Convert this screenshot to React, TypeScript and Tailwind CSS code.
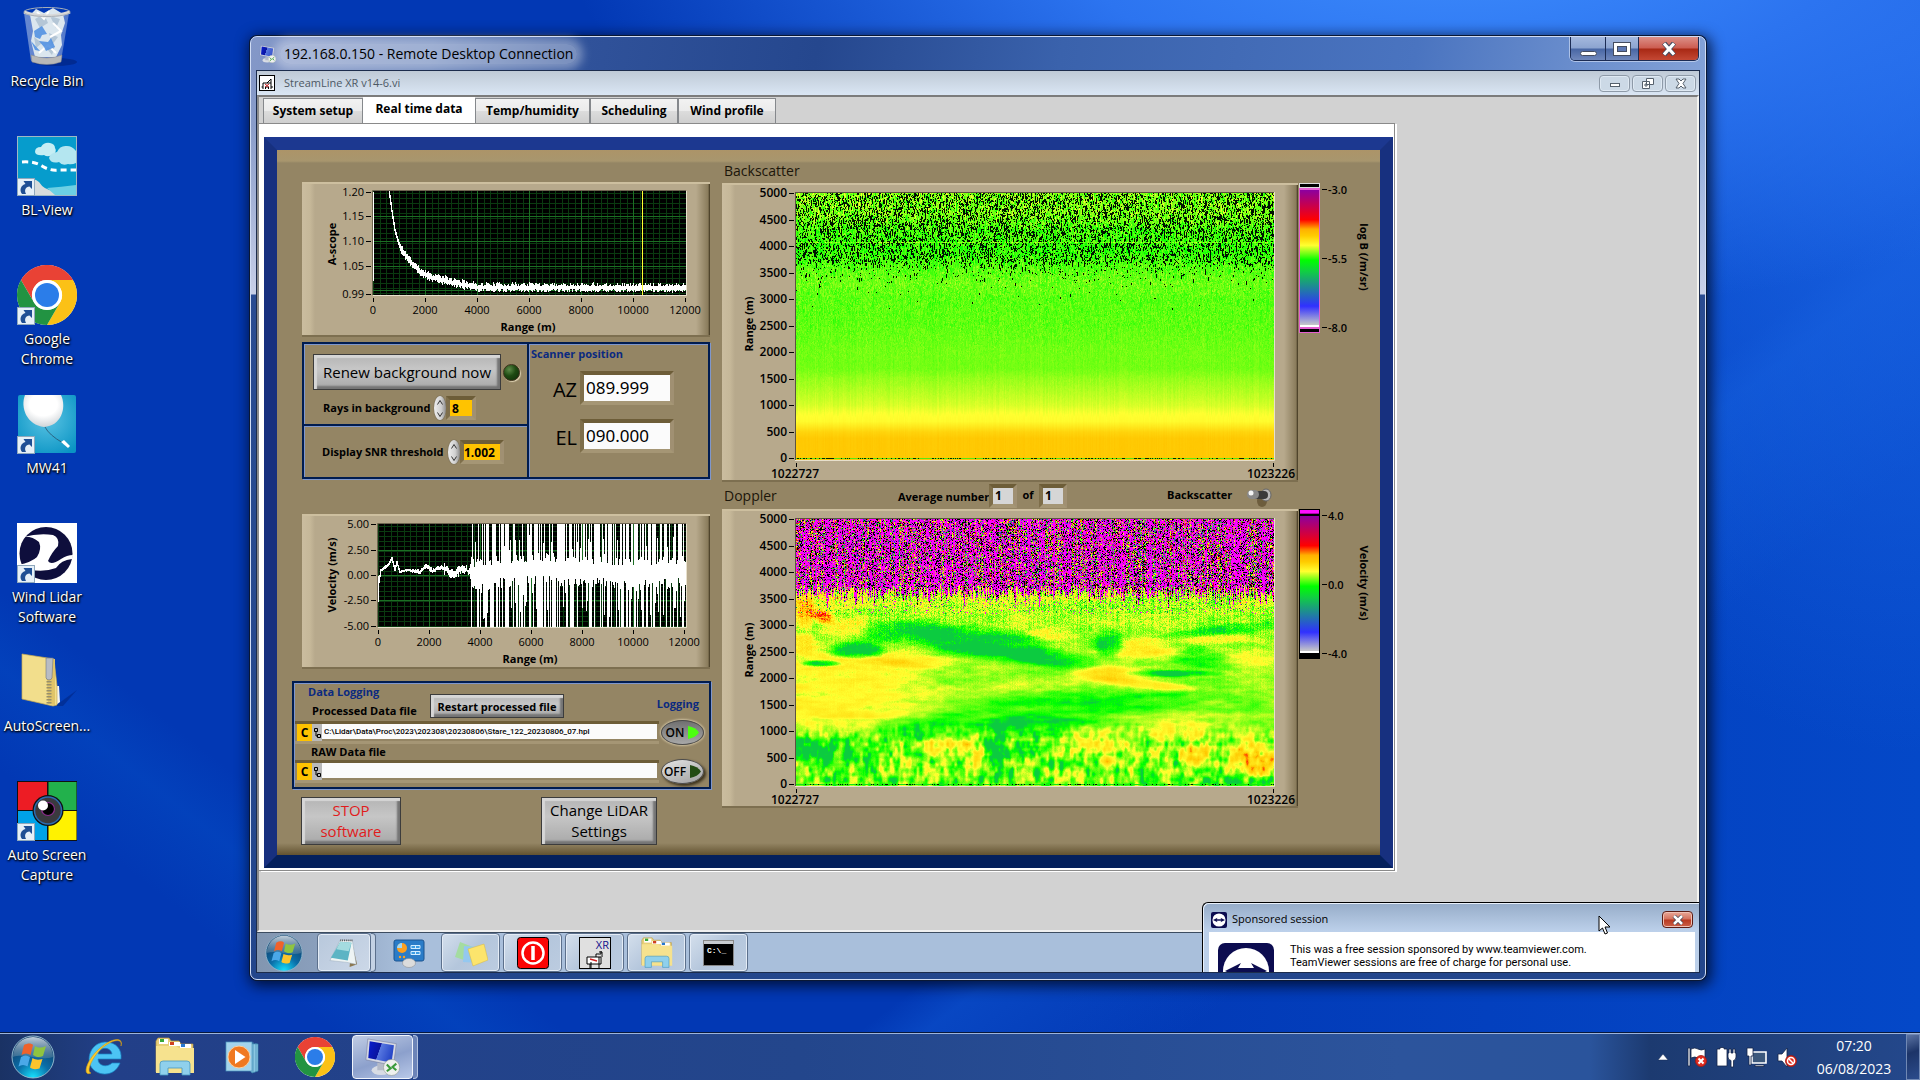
import { useLayoutEffect, useRef } from "react";
import type { ReactNode } from "react";

/* ---------- helpers ---------- */

function rng(seed: number) {
  let s = seed;
  return () => {
    s = (s + 0x6d2b79f5) | 0;
    let t = Math.imul(s ^ (s >>> 15), 1 | s);
    t = (t + Math.imul(t ^ (t >>> 7), 61 | t)) ^ t;
    return ((t ^ (t >>> 14)) >>> 0) / 4294967296;
  };
}

const STOPS: [number, number[]][] = [
  [-1, [48, 48, 255]],
  [0, [0, 255, 0]],
  [0.5, [124, 255, 20]],
  [1, [255, 255, 48]],
  [2, [255, 198, 0]],
  [2.6, [255, 0, 0]],
  [4, [140, 0, 160]],
];

function colour(v: number): number[] {
  if (v <= STOPS[0][0]) return STOPS[0][1];
  for (let i = 1; i < STOPS.length; i++) {
    if (v <= STOPS[i][0]) {
      const [a, ca] = STOPS[i - 1];
      const [b, cb] = STOPS[i];
      const t = (v - a) / (b - a);
      return ca.map((c, k) => c + (cb[k] - c) * t);
    }
  }
  return STOPS[STOPS.length - 1][1];
}

function interp(points: number[][], x: number) {
  if (x <= points[0][0]) return points[0][1];
  for (let i = 1; i < points.length; i++) {
    if (x <= points[i][0]) {
      const [x0, y0] = points[i - 1];
      const [x1, y1] = points[i];
      return y0 + ((y1 - y0) * (x - x0)) / (x1 - x0);
    }
  }
  return points[points.length - 1][1];
}

function valueNoise(seed: number) {
  const r = rng(seed);
  const g = Array.from({ length: 65536 }, () => r() * 2 - 1);
  const at = (i: number, j: number) => g[((i & 255) << 8) | (j & 255)];
  return (x: number, y: number) => {
    const i = Math.floor(x);
    const j = Math.floor(y);
    let fx = x - i;
    let fy = y - j;
    fx = fx * fx * (3 - 2 * fx);
    fy = fy * fy * (3 - 2 * fy);
    const a = at(i, j) * (1 - fx) + at(i + 1, j) * fx;
    const b = at(i, j + 1) * (1 - fx) + at(i + 1, j + 1) * fx;
    return a * (1 - fy) + b * fy;
  };
}

const MAP_W = 478;
const MAP_H = 267;

function paintBackscatter(d: Uint8ClampedArray) {
  const r = rng(7);
  const profile = [
    [0, 1.95], [380, 1.95], [500, 1.75], [600, 1.4], [700, 1.08], [850, 0.98], [1000, 0.85], [1250, 0.72],
    [1500, 0.6], [1700, 0.46], [2000, 0.46], [2500, 0.38], [3000, 0.36], [3300, 0.44], [3600, 0.34], [3900, 0.2],
    [4300, 0.3], [4600, 0.5], [5000, 0.52],
  ];
  const columns = Array.from({ length: MAP_W }, () => (r() - 0.5) * 0.08);
  const held = new Array(MAP_W).fill(0);
  const black = new Array(MAP_W).fill(false);
  for (let y = 0; y < MAP_H; y++) {
    const m = (1 - y / (MAP_H - 2)) * 5000;
    const base = interp(profile, m);
    const dark = interp([[2800, 0], [3300, 0.01], [3600, 0.08], [3750, 0.3], [4500, 0.32], [5000, 0.36]], m);
    const spread = interp([[900, 0.03], [1800, 0.14], [2500, 0.34], [3500, 0.55], [4200, 0.7], [5000, 1]], m);
    for (let x = 0; x < MAP_W; x++) {
      const k = (y * MAP_W + x) * 4;
      if (r() < 0.65) {
        held[x] = (r() + r() - 1) * 0.6;
        black[x] = r() < dark;
      }
      let v = base + columns[x] + held[x] * spread;
      if (v < 0) v = 0;
      const line = y === 49 && r() < 0.7;
      if (line) v += 0.3;
      let c = colour(v);
      if (black[x] && !line) c = [0, 20, 0];
      if (y === MAP_H - 2) c = r() < 0.35 ? [0, 40, 0] : [90, 230, 20];
      d[k] = c[0];
      d[k + 1] = c[1];
      d[k + 2] = c[2];
      d[k + 3] = 255;
    }
  }
}

/* centre x, centre y, radius x, radius y, change, tilt */
const FEATURES = [
  [50, 165, 75, 36, 0.55, 0],
  [20, 200, 90, 14, 0.2, -0.1],
  [9, 90, 9, 16, 1.1, 0],
  [26, 97, 10, 6, 1.7, 0.2],
  [8, 124, 12, 10, 0.7, 0],
  [50, 108, 20, 12, 0.5, 0],
  [60, 131, 25, 8, -1.3, 0],
  [25, 144, 17, 3, -1.3, 0],
  [110, 112, 42, 11, -0.75, 0],
  [185, 122, 60, 13, -0.85, 0.1],
  [205, 136, 60, 9, -0.5, 0.1],
  [262, 140, 38, 9, -0.6, 0.1],
  [312, 124, 13, 12, -0.8, 0],
  [118, 141, 28, 7, 0.5, 0.1],
  [85, 142, 40, 4, 0.45, 0.1],
  [310, 154, 34, 7, 0.9, 0],
  [350, 165, 40, 4, 0.7, 0.1],
  [352, 130, 30, 11, 0.55, 0],
  [460, 138, 26, 9, 0.5, 0],
  [255, 114, 20, 6, 0.5, 0],
  [420, 120, 30, 4, 0.45, -0.05],
  [400, 138, 26, 9, -0.5, 0],
  [375, 154, 42, 3, -0.75, 0],
  [430, 110, 60, 5, -0.5, -0.1],
  [240, 190, 100, 15, -0.5, -0.07],
  [250, 206, 50, 10, -0.4, 0],
  [350, 184, 90, 9, -0.35, -0.05],
  [10, 226, 14, 8, -0.7, 0.3],
  [50, 232, 45, 12, -0.4, 0],
  [125, 212, 45, 8, -0.4, 0],
  [200, 238, 14, 30, -0.5, 0],
  [150, 226, 25, 10, 0.6, 0],
  [182, 240, 12, 14, 0.7, 0],
  [290, 220, 32, 12, 0.6, 0],
  [312, 235, 8, 10, 0.8, 0],
  [380, 212, 40, 10, 0.6, 0],
  [400, 235, 18, 9, 1.0, 0],
  [460, 238, 26, 16, 1.2, 0],
  [440, 262, 30, 6, -0.5, 0],
];

function paintDoppler(d: Uint8ClampedArray) {
  const r = rng(21);
  const wide = valueNoise(3);
  const fine = valueNoise(5);
  const turb = valueNoise(9);
  const streak = valueNoise(15);
  const cols = Array.from({ length: MAP_W }, () => {
    const tint = r() < 0.14;
    return {
      pink: tint ? 0.05 + r() * 0.2 : 0.25 + r() * 0.5,
      black: 0.06 + r() * 0.24,
      tint,
      edge: 75 + (r() - 0.5) * 14 + (r() < 0.15 ? 8 : 0),
      shift: (r() - 0.5) * 0.3,
    };
  });
  for (let y = 0; y < MAP_H; y++) {
    const shake = interp([[70, 1.1], [110, 0.5], [140, 0.2], [200, 0.1], [267, 0.12]], y);
    const low = interp([[198, 0], [222, 1]], y);
    for (let x = 0; x < MAP_W; x++) {
      const c0 = cols[x];
      const k = (y * MAP_W + x) * 4;
      let c: number[];
      const q = r();
      if (y < c0.edge - r() * 4) {
        const pink = c0.pink + streak(x / 1.5, y / 14) * 0.2;
        if (q < pink) c = [255, 0, 255];
        else if (q < pink + c0.black) c = [0, 0, 0];
        else if (q < pink + c0.black + 0.14) c = [150, 30, 170];
        else c = colour(r() * 4.2 - (c0.tint ? 1.4 : 0.8));
      } else {
        let v = 0.62 + wide(x / 38, y / 7) * 0.22 + fine(x / 9, y / 2.5) * 0.16 + fine(x / 22 + 90, y / 4) * 0.12;
        for (const f of FEATURES) {
          const dx = (x - f[0]) / f[2];
          const dy = (y - f[1] - (x - f[0]) * f[5]) / f[3];
          const e = dx * dx + dy * dy;
          if (e < 5) v += f[4] * Math.exp(-e * e * 0.7);
        }
        v += interp([[75, 0.25], [95, 0.08], [120, 0]], y);
        v += low * (-0.18 + turb(x / 5, y / 9) * 0.6 + turb(x / 2.7 + 40, y / 5) * 0.45);
        v += c0.shift * shake * 2 + (r() + r() - 1) * shake * 0.8;
        if (v < -0.25) v = -0.25;
        c = colour(v);
        if (y < 95 && q < 0.05) c = q < 0.025 ? [255, 0, 255] : [0, 150, 60];
      }
      if (y === MAP_H - 2) c = r() < 0.2 ? [0, 20, 0] : [20, 230, 20];
      d[k] = c[0];
      d[k + 1] = c[1];
      d[k + 2] = c[2];
      d[k + 3] = 255;
    }
  }
}

function HeatMap({ paint, label }: { paint: (d: Uint8ClampedArray) => void; label: string }) {
  const ref = useRef<HTMLCanvasElement>(null);
  useLayoutEffect(() => {
    const ctx = ref.current?.getContext("2d");
    if (!ctx) return;
    const image = ctx.createImageData(MAP_W, MAP_H);
    paint(image.data);
    ctx.putImageData(image, 0, 0);
  }, [paint]);
  return <canvas ref={ref} width={MAP_W} height={MAP_H} role="img" aria-label={label} className="absolute left-[74px] top-2" />;
}

/* ---------- charts ---------- */

const PANEL =
  "border-t-2 border-b-2 border-t-[#cdbf9f] border-b-[#7d6f50] bg-[linear-gradient(90deg,#cbbd9f_0,#c6b899_8px,#b7a98c_13px,#b7a98c_calc(100%-14px),#8a7c5c_calc(100%-2px),#3c321c_100%)]";

type Axis = { at: number; text: string };

function Plot(props: {
  x: number; y: number; w: number; h: number; yTicks: Axis[]; xStep: number; title: string; titleY: number;
  major: number[]; labelX: number; xTitle: number; name: string; nameX: number; children: ReactNode;
}) {
  const { x, y, w, h, yTicks, xStep, major } = props;
  const minorX = Array.from({ length: 48 }, (_, i) => x + Math.round((i * xStep) / 8));
  const minorY = Array.from({ length: 21 }, (_, i) => y + 2 + i * 5).filter((v) => v < y + h);
  return (
    <svg className="-mt-0.5 block h-[155px] w-[408px]" viewBox="0 0 408 155" role="img" aria-label={props.name} fontFamily='"Open Sans", "Noto Sans", sans-serif' fontSize="11" fill="#000">
      <rect x={x} y={y} width={w} height={h} fill="#000" />
      <g shapeRendering="crispEdges">
        {minorX.map((v) => <rect key={v} x={v} y={y} width="1" height={h} fill="#0a3a10" />)}
        {minorY.map((v) => <rect key={v} x={x} y={v} width={w} height="1" fill="#0a3a10" />)}
        {[1, 2, 3, 4, 5].map((i) => <rect key={i} x={x + Math.round(i * xStep)} y={y} width="1" height={h} fill="#1c6e24" />)}
        {major.map((v) => <rect key={v} x={x} y={v} width={w} height="1" fill="#1c6e24" />)}
      </g>
      {props.children}
      <path d={`M${x - 0.5} ${y + h}V${y - 0.5}H${x + w}`} fill="none" stroke="#6e6450" />
      <path d={`M${x} ${y + h + 0.5}H${x + w + 0.5}V${y}`} fill="none" stroke="#e8e0cc" />
      {yTicks.map((t) => (
        <g key={t.text}>
          <rect x={x - 7} y={t.at} width="5" height="1" />
          <text x={x - 9} y={t.at + 4} textAnchor="end">{t.text}</text>
        </g>
      ))}
      {[0, 1, 2, 3, 4, 5, 6].map((i) => (
        <g key={i}>
          <rect x={x + Math.round(i * xStep)} y={y + h + 3} width="1" height="4" />
          <text x={x + i * xStep} y={y + h + 19} textAnchor="middle">{i * 2000}</text>
        </g>
      ))}
      <text x={props.xTitle} y={props.labelX} textAnchor="middle" fontWeight="700">Range (m)</text>
      <text transform={`translate(${props.nameX} ${props.titleY}) rotate(-90)`} textAnchor="middle" fontWeight="700">{props.title}</text>
    </svg>
  );
}

function scopePath() {
  const r = rng(11);
  const curve = [[87, 9], [90, 30], [93, 49], [98, 66], [106, 78], [118, 90], [129, 95], [152, 101], [175, 105.5], [384, 106]];
  let p = "M71.5 99V10";
  for (let x = 87; x < 384; x++) {
    const n = x < 98 ? 2 : 4;
    const c = interp(curve, x);
    const next = interp(curve, x + 1);
    p += `M${x + 0.5} ${Math.max(9, Math.floor(c - 1 - r() * n))}V${Math.ceil(Math.max(next, c + 1 + r() * n * 0.8))}`;
  }
  return p;
}

function velocityPath() {
  const r = rng(4);
  const curve = [[77, 68], [79, 56], [82, 54], [87, 50], [90, 44], [93, 56], [95, 48], [98, 58], [105, 56], [118, 58], [124, 52], [131, 57], [139, 53], [146, 57], [152, 61], [160, 54], [172, 60], [240, 54], [290, 56], [340, 59], [384, 57]];
  let p = "M75.5 113V68M76.500 88V62";
  for (let x = 77; x < 384; x++) {
    const c = interp(curve, x);
    const next = interp(curve, x + 1);
    let up: number;
    let down: number;
    if (x < 168) {
      const n = x < 110 ? 1 : x < 142 ? 2 : 5;
      up = Math.min(c, next) - 0.5 - r() * n;
      down = Math.max(c, next) + 0.5 + r() * n;
    } else {
      up = r() < 0.5 ? 10 : c - 6 - r() * (r() < 0.3 ? 30 : 10);
      down = r() < 0.42 ? 113 : c + 6 + r() * (r() < 0.35 ? 40 : 12);
    }
    p += `M${x + 0.5} ${Math.round(up)}V${Math.round(down)}`;
  }
  return p;
}

function AScope() {
  return (
    <Plot x={71} y={9} w={313} h={104} xStep={52} title="A-scope" name="A-scope" titleY={62} nameX={34} major={[34, 59, 84, 108]} labelX={149} xTitle={226}
      yTicks={[{ at: 10, text: "1.20" }, { at: 34, text: "1.15" }, { at: 59, text: "1.10" }, { at: 84, text: "1.05" }, { at: 112, text: "0.99" }]}>
      <path d={scopePath()} fill="none" stroke="#fff" strokeWidth="1" />
      <rect x="340" y="9" width="1" height="104" fill="#ffff30" />
    </Plot>
  );
}

function VelocityScope() {
  return (
    <Plot x={76} y={10} w={308} h={103} xStep={51} title="Velocity (m/s)" name="Velocity" titleY={61} nameX={34} major={[36, 61, 86]} labelX={149} xTitle={228}
      yTicks={[{ at: 10, text: "5.00" }, { at: 36, text: "2.50" }, { at: 61, text: "0.00" }, { at: 86, text: "-2.50" }, { at: 112, text: "-5.00" }]}>
      <path d={velocityPath()} fill="none" stroke="#fff" strokeWidth="1" />
    </Plot>
  );
}

function MapPanel({ paint, label }: { paint: (d: Uint8ClampedArray) => void; label: string }) {
  return (
    <div className={`relative h-[299px] w-[576px] shrink-0 ${PANEL}`}>
      <svg className="-mt-0.5 block h-[299px] w-[576px]" viewBox="0 0 576 299" fontFamily='"Open Sans", "Noto Sans", sans-serif' fontSize="12" fontWeight="600">
        <rect x="73" y="9" width="480" height="1" fill="#5c5340" />
        <rect x="73" y="9" width="1" height="268" fill="#5c5340" />
        <path d="M73 277.500H552.500V9" fill="none" stroke="#e8e0cc" />
        {Array.from({ length: 11 }, (_, i) => (
          <g key={i}>
            <rect x="67" y={Math.round(10 + i * 26.5)} width="5" height="1" />
            <text x="65" y={Math.round(14 + i * 26.5)} textAnchor="end">{5000 - i * 500}</text>
          </g>
        ))}
        <rect x="74" y="280" width="1" height="4" />
        <rect x="551" y="280" width="1" height="4" />
        <text x="73" y="295" textAnchor="middle">1022727</text>
        <text x="549" y="295" textAnchor="middle">1023226</text>
        <text transform="translate(31 141) rotate(-90)" textAnchor="middle" fontSize="11" fontWeight="700">Range (m)</text>
      </svg>
      <HeatMap paint={paint} label={label} />
    </div>
  );
}

function ColourBar({ id, ends, ticks, title }: { id: string; ends: "grey" | "pink"; ticks: string[]; title: string }) {
  const pink = ends === "pink";
  return (
    <svg className="block h-[152px] w-[78px] overflow-visible" viewBox="0 0 78 152" role="img" aria-label={title} fontFamily='"Open Sans", "Noto Sans", sans-serif' fontSize="11" fontWeight="600">
      <defs>
        <linearGradient id={id} x1="0" y1="0" x2="0" y2="1">
          <stop offset="0" stopColor="#8c00a0" />
          <stop offset="0.22" stopColor="#ff0000" />
          <stop offset="0.29" stopColor="#ffb000" />
          <stop offset="0.34" stopColor="#ffcc00" />
          <stop offset="0.41" stopColor="#ffff30" />
          <stop offset="0.52" stopColor="#00ff00" />
          <stop offset="0.6" stopColor="#10d040" />
          <stop offset="0.86" stopColor="#3030ff" />
          <stop offset="1" stopColor="#c8c8c8" />
        </linearGradient>
      </defs>
      <rect x="1" y="0" width="21" height="150" fill={pink ? "#000" : "#e35fd0"} />
      <rect x="1" y="0" width="21" height="5" fill={pink ? "#000" : "#dcdcdc"} />
      <rect x="2" y="1" width="19" height="3" fill={pink ? "#ff10ff" : "#000"} />
      {pink && <rect x="2" y="4" width="19" height="1" fill="#b000b0" />}
      <rect x="2" y="7" width="19" height="135" fill={`url(#${id})`} />
      <rect x="2" y="142" width="19" height="2" fill="#fff" />
      <rect x="2" y="146" width="19" height="3" fill="#000" />
      {ticks.map((t, i) => (
        <g key={t}>
          <rect x="24" y={6 + i * 69} width="5" height="1" />
          <text x="30" y={11 + i * 69}>{t}</text>
        </g>
      ))}
      <text transform="translate(62 74) rotate(90)" textAnchor="middle" fontSize="11" fontWeight="700">{title}</text>
    </svg>
  );
}

/* ---------- front panel controls ---------- */

const BOX = "border-2 border-[#001c50] shadow-[inset_1px_1px_0_#7f97cc,1px_1px_0_#7f97cc]";
const STEEL =
  "border border-[#3c3c3c] bg-[linear-gradient(180deg,#b4b4b4,#c6c6c6_40%,#a8a8a8)] shadow-[inset_3px_3px_1px_#d6d6d6,inset_-3px_-3px_2px_#747474]";
const WELL = "border-[4px] border-t-[#6d5d38] border-r-[#a09072] border-b-[#a59675] border-l-[#7e6e4a]";

function Spinner({ label }: { label: string }) {
  return (
    <span className="flex h-6 w-3 shrink-0 flex-col overflow-hidden rounded-[50%] bg-[linear-gradient(90deg,#eeeeee,#d0d0d0_60%,#8c8c8c)] shadow-[0_0_1px_#333]">
      {["up", "down"].map((dir) => (
        <button key={dir} type="button" aria-label={`${label} ${dir}`} className="flex h-3 items-center justify-center">
          <svg viewBox="0 0 6 5" className={dir === "up" ? "h-[5px] w-1.5" : "h-[5px] w-1.5 rotate-180"}>
            <path d="M.5 4.500 3 .5l2.500 4" fill="none" stroke="#333" />
          </svg>
        </button>
      ))}
    </span>
  );
}

function Oval({ on }: { on: boolean }) {
  return (
    <button type="button" aria-pressed={on} className={`flex h-[25px] w-[43px] items-center justify-center gap-1 rounded-[50%] border border-[#4c4c4c] text-xs font-semibold leading-none text-black ${on ? "bg-[linear-gradient(180deg,#707070,#a8a8a8)] shadow-[0_0_2px_1px_#cdbf9f]" : "bg-[linear-gradient(160deg,#e4e4e4,#a0a0a0)] shadow-[2px_2px_3px_#3c321c]"}`}>
      {on ? "ON" : "OFF"}
      <svg viewBox="0 0 11 13" className="h-[13px] w-[11px]">
        <path d="M0 0c5 1 9 3 11 6.500C9 10 5 12 0 13z" fill={on ? "#4cff10" : "#234c14"} />
      </svg>
    </button>
  );
}

function FileRow({ id, value, on }: { id: string; value: string; on: boolean }) {
  return (
    <div className="flex items-center">
      <div className="flex h-[23px] w-[364px] border-t-[3px] border-b-[3px] border-t-[#6d5d38] border-b-[#a59675]">
        <button type="button" className="ml-0.5 w-[15px] bg-[#ffc300] text-center text-xs font-bold leading-[17px] text-black">C</button>
        <span className="flex w-2.5 items-center justify-center bg-[#b9b9b9]">
          <svg viewBox="0 0 8 12" className="h-3 w-2">
            <path d="M1.500 1.500h3v3h-3zM4.500 7.500h3v3h-3zM3 4.500V9h1.500" fill="none" stroke="#000" />
          </svg>
        </span>
        <input id={id} defaultValue={value} className="h-[15px] min-w-0 flex-1 bg-[#fbfbfb] px-0.5 font-['Roboto'] text-[8px] font-medium leading-none text-black" />
        <span className="w-0.5" />
      </div>
      <div className="ml-0.5">
        <Oval on={on} />
      </div>
    </div>
  );
}

function ScannerField({ id, label, value }: { id: string; label: string; value: string }) {
  return (
    <div className="flex items-center justify-end gap-[3px]">
      <label htmlFor={id} className="pt-1 text-xl leading-none">{label}</label>
      <input id={id} defaultValue={value} className={`h-[34px] w-[94px] bg-[#fbfbfb] px-0.5 font-["Noto_Sans"] text-[17px] leading-none text-black ${WELL}`} />
    </div>
  );
}

function LeftColumn() {
  return (
    <div className="flex w-[419px] shrink-0 flex-col pt-8">
      <div className={`ml-2.5 h-[155px] w-[408px] ${PANEL}`}>
        <AScope />
      </div>
      <div className={`ml-2.5 mt-[5px] flex h-[137px] w-[408px] ${BOX}`}>
        <div className="flex w-[225px] flex-col border-r-2 border-[#001c50]">
          <div className="h-[82px] border-b-2 border-[#001c50] pl-[9px] pt-2.5 shadow-[0_1px_0_#7f97cc]">
            <div className="flex items-center gap-0.5">
              <button type="button" className={`h-9 w-[188px] text-[15px] leading-none text-black ${STEEL}`}>Renew background now</button>
              <span className="size-[17px] rounded-full border border-[#3c321c] bg-[radial-gradient(circle_at_35%_30%,#5c8a48,#1e4a12_45%,#0e2a08)] shadow-[1px_1px_1px_#e0d4b4]" />
            </div>
            <div className="flex items-center pl-2.5 pt-1.5">
              <label htmlFor="rays" className="w-[111px] whitespace-nowrap text-[11px] font-bold">Rays in background</label>
              <Spinner label="Rays in background" />
              <input id="rays" defaultValue="8" className={`h-6 w-[30px] bg-[#ffc300] px-0.5 text-xs font-bold leading-none text-black ${WELL}`} />
            </div>
          </div>
          <div className="flex items-center pl-[18px] pt-3.5">
            <label htmlFor="snr" className="w-[126px] whitespace-nowrap text-[11px] font-bold">Display SNR threshold</label>
            <Spinner label="Display SNR threshold" />
            <input id="snr" defaultValue="1.002" className={`h-6 w-[44px] bg-[#ffc300] px-0 text-xs font-bold leading-none text-black ${WELL}`} />
          </div>
        </div>
        <div className="flex-1 shadow-[inset_1px_0_0_#7f97cc]">
          <h2 className="pl-0.5 pt-0.5 text-[11px] font-bold text-[#0b2a80]">Scanner position</h2>
          <div className="flex flex-col gap-3.5 pr-[34px] pt-2">
            <ScannerField id="az" label="AZ" value="089.999" />
            <ScannerField id="el" label="EL" value="090.000" />
          </div>
        </div>
      </div>
      <div className={`ml-2.5 mt-[35px] h-[155px] w-[408px] ${PANEL}`}>
        <VelocityScope />
      </div>
      <div className={`mt-3 h-[108px] w-[419px] pl-px ${BOX}`}>
        <div className="flex h-[37px] items-start">
          <div className="w-[135px] pl-[13px] text-[11px] font-bold">
            <h2 className="leading-[18px] text-[#0b2a80]">Data Logging</h2>
            <label htmlFor="processed" className="block whitespace-nowrap pl-1 leading-[20px]">Processed Data file</label>
          </div>
          <button type="button" className={`mt-[11px] h-6 w-[134px] whitespace-nowrap text-[11px] font-bold leading-none text-black ${STEEL}`}>Restart processed file</button>
          <span className="mt-[13px] flex-1 pr-2.5 text-right text-[11px] font-bold text-[#0b2a80]">Logging</span>
        </div>
        <FileRow id="processed" value="C:\Lidar\Data\Proc\2023\202308\20230806\Stare_122_20230806_07.hpl" on />
        <label htmlFor="raw" className="block pl-4 text-[11px] font-bold leading-[14px]">RAW Data file</label>
        <FileRow id="raw" value="" on={false} />
      </div>
      <div className="mt-2 flex gap-[140px] pl-[9px]">
        <button type="button" className={`h-12 w-[100px] text-[15px] leading-[21px] text-[#e01c1c] ${STEEL}`}>STOP<br />software</button>
        <button type="button" className={`h-12 w-[116px] text-[15px] leading-[21px] text-black ${STEEL}`}>Change LiDAR<br />Settings</button>
      </div>
    </div>
  );
}

function RightColumn() {
  return (
    <div className="ml-[11px] flex flex-col pt-2">
      <h2 className="h-[25px] pl-0.5 text-sm leading-[25px] text-[#1c160a]">Backscatter</h2>
      <div className="flex items-start">
        <MapPanel paint={paintBackscatter} label="Backscatter over time and range" />
        <ColourBar id="scale-backscatter" ends="grey" ticks={["-3.0", "-5.5", "-8.0"]} title="log B (/m/sr)" />
      </div>
      <div className="flex h-[27px] items-center">
        <h2 className="w-[176px] pl-0.5 text-sm leading-none text-[#1c160a]">Doppler</h2>
        <label htmlFor="average" className="w-[91px] whitespace-nowrap pt-1 text-[11px] font-bold">Average number</label>
        <input id="average" defaultValue="1" className={`h-6 w-[28px] bg-[#d6d6d6] px-0.5 text-xs font-bold leading-none text-black ${WELL}`} />
        <label htmlFor="of" className="w-[22px] text-center text-[11px] font-bold">of</label>
        <input id="of" defaultValue="1" className={`h-6 w-[28px] bg-[#d6d6d6] px-0.5 text-xs font-bold leading-none text-black ${WELL}`} />
        <span className="w-[100px]" />
        <span className="w-[79px] text-[11px] font-bold">Backscatter</span>
        <button type="button" role="switch" aria-checked={false} aria-label="Backscatter">
          <svg viewBox="0 0 28 22" className="h-[22px] w-7">
            <ellipse cx="16" cy="16" rx="5" ry="6" fill="#5c4c2c" opacity=".7" />
            <ellipse cx="20" cy="10" rx="5" ry="6" fill="#b8b8b8" stroke="#666" />
            <rect x="6" y="6" width="16" height="8" rx="4" fill="#3a3a3a" />
            <rect x="1" y="5" width="12" height="9" rx="4.500" fill="#888" />
            <circle cx="5" cy="8" r="2.500" fill="#f4f4f4" />
          </svg>
        </button>
      </div>
      <div className="flex items-start">
        <MapPanel paint={paintDoppler} label="Doppler velocity over time and range" />
        <ColourBar id="scale-doppler" ends="pink" ticks={["4.0", "0.0", "-4.0"]} title="Velocity (m/s)" />
      </div>
    </div>
  );
}

/* ---------- icons ---------- */

function Chrome({ className }: { className: string }) {
  return (
    <svg viewBox="0 0 48 48" className={className}>
      <circle cx="24" cy="24" r="24" fill="#fff" />
      <path d="M3.200 12A24 24 0 0 1 44.800 12H24a12 12 0 0 0-10.400 18z" fill="#e94235" />
      <path d="M44.800 12A24 24 0 0 1 24 48l10.400-18A12 12 0 0 0 24 12z" fill="#fbc116" />
      <path d="M24 48A24 24 0 0 1 3.200 12l10.400 18A12 12 0 0 0 34.400 30z" fill="#229342" />
      <circle cx="24" cy="24" r="12" fill="#fff" />
      <circle cx="24" cy="24" r="9.600" fill="#2b7de9" />
    </svg>
  );
}

function Shortcut() {
  return (
    <svg viewBox="0 0 18 18" className="absolute bottom-0 left-0 size-[18px]">
      <rect x=".5" y=".5" width="17" height="17" fill="#e6f0f8" stroke="#8fa8bc" />
      <path d="M5 16C2 12 4 7 8.500 6L6.500 3H15v8l-2.500-2.500C8.500 9 7 12 9 16z" fill="#1f4f94" />
    </svg>
  );
}

function Orb({ className, id }: { className: string; id: string }) {
  return (
    <svg viewBox="0 0 44 44" className={className}>
      <defs>
        <radialGradient id={`${id}a`} cx=".5" cy="1" r=".9">
          <stop offset="0" stopColor="#17e4ff" />
          <stop offset=".45" stopColor="#0a6ea8" />
          <stop offset="1" stopColor="#123a66" />
        </radialGradient>
        <linearGradient id={`${id}b`} x1="0" y1="0" x2="0" y2="1">
          <stop offset="0" stopColor="#dfe9f0" stopOpacity=".85" />
          <stop offset="1" stopColor="#7898ac" stopOpacity=".35" />
        </linearGradient>
      </defs>
      <circle cx="22" cy="22" r="21" fill={`url(#${id}a)`} stroke="#8fb6cc" />
      <path d="M2 22a20 20 0 0 1 40 0c-12 4-28-4-40 0z" fill={`url(#${id}b)`} />
      <path d="M13 10c4-2 7-2 9 0l-2.500 10c-3-2-6-2-9 0z" fill="#f0622a" />
      <path d="M24 11c3 2 7 2 11 0l-3 10c-4 2-7 1-10-1z" fill="#8fc440" />
      <path d="M10 22c3-2 6-2 9 0l-2.500 9.500c-3-2-6-2-9 0z" fill="#4aa8e8" />
      <path d="M21.500 23c3 2 6 2 10 1l-3 9.500c-4 1-7 1-9.500-1z" fill="#fcc42c" />
    </svg>
  );
}

function RemoteIcon({ className, id }: { className: string; id: string }) {
  return (
    <svg viewBox="0 0 40 40" className={className}>
      <defs>
        <linearGradient id={id} x1="0" y1="0" x2="1" y2=".3">
          <stop offset="0" stopColor="#0a1ed0" />
          <stop offset=".5" stopColor="#0a14a0" />
          <stop offset=".52" stopColor="#5878e0" />
          <stop offset="1" stopColor="#2848c8" />
        </linearGradient>
      </defs>
      <ellipse cx="18" cy="34" rx="10" ry="5" fill="#d8dce4" />
      <path d="M14 26h9l2 8H14z" fill="#b4bac8" />
      <path d="M4 1l30 5-3 23L2 23z" fill="#d4d8e4" stroke="#7880a0" strokeWidth=".6" />
      <path d="M6 3.500l25.500 4-2.500 18.500L4.500 21z" fill={`url(#${id})`} />
      <circle cx="29" cy="31" r="8.500" fill="#eef0ee" stroke="#909890" strokeWidth=".6" />
      <path d="M24 28l4 4-4 3M34 27l-4 3.500 4 3.500" fill="none" stroke="#3a9a3a" strokeWidth="2.200" />
    </svg>
  );
}

function Folders({ className }: { className: string }) {
  return (
    <svg viewBox="0 0 40 40" className={className}>
      <path d="M1 4l2-3h11l2 3h8l2 3h12v28H1z" fill="#e8cf78" stroke="#b89a48" strokeWidth=".7" />
      <rect x="4" y="2" width="9" height="5" fill="#fff" /><rect x="5" y="2" width="4" height="3" fill="#38a838" />
      <rect x="14" y="5" width="11" height="4" fill="#fff" /><rect x="15" y="5" width="4" height="3" fill="#d04020" />
      <rect x="25" y="7" width="11" height="4" fill="#fff" /><rect x="26" y="7" width="4" height="3" fill="#2878d0" />
      <path d="M1 9h20l3 2h15v25H1z" fill="#f6e28e" />
      <path d="M5 38V27q0-3 3-3h24q3 0 3 3v11h-8v-7H13v7z" fill="#8fd0ec" stroke="#4898c0" strokeWidth=".8" />
    </svg>
  );
}

function RecycleBin() {
  return (
    <svg viewBox="0 0 60 60" className="size-[60px]">
      <defs>
        <linearGradient id="bin" x1="0" y1="0" x2="1" y2="0">
          <stop offset="0" stopColor="#c8d8ec" stopOpacity=".5" />
          <stop offset=".5" stopColor="#fff" stopOpacity=".35" />
          <stop offset="1" stopColor="#a0b8e0" stopOpacity=".5" />
        </linearGradient>
      </defs>
      <ellipse cx="38" cy="55" rx="22" ry="4" fill="#001c70" opacity=".5" />
      <path d="M7 6l7 48q16 6 30 0L52 6z" fill="url(#bin)" />
      <path d="M13 8l6-6 8 4 9-5 10 6 2 9-4 12 1 10-6 12H18l-4-16 2-10z" fill="#dbe6ee" />
      <path d="M18 12l9-5 4 9-8 5zM33 9l10 3-4 9zM17 30l8 6-6 5zM32 26l9 4-6 8zM30 42l8-3-3 9z" fill="#b4c6d6" />
      <path d="M20 5l7 7 5-8M36 16l8 8-11 6M22 46l9-8 8 8" fill="none" stroke="#fff" strokeWidth="2" />
      <path d="M17 24l8-5 5 8-5 1-2 4-5-2zM22 34l9 1 3-4 4 9-9 4-2-4zM14 34l4 9 5 1" fill="#4a8ce0" opacity=".85" />
      <path d="M14 48q16 6 31 0l-1 7q-14 5-29 0z" fill="#b8b8b8" stroke="#888" strokeWidth=".5" />
      <path d="M7 5q22 8 46 0" fill="none" stroke="#d8d8d8" strokeWidth="3" />
      <ellipse cx="30" cy="5" rx="23" ry="4.500" fill="none" stroke="#a8b0b8" />
    </svg>
  );
}

function BLView() {
  return (
    <svg viewBox="0 0 60 60" className="size-[60px]">
      <rect x=".5" y=".5" width="59" height="59" fill="#069ccc" stroke="#9fb8c4" />
      <path d="M18 16q0-5 6-5 3-5 9-4 5 1 5 5 2 3-1 6-6 4-10 1-8 1-9-3z" fill="#c6eef4" />
      <path d="M32 22q1-5 8-6 3-7 10-6 5 0 9 5v12q-4 2-8 1-6 2-9-2-8 2-10-4z" fill="#b4e6f0" />
      <path d="M5 26q12-1 20 4t16 4h18" fill="none" stroke="#fff" strokeWidth="3" strokeDasharray="6 4" />
      <path d="M1 59V43q14-3 21 3 5 8 15 9l8 4z" fill="#d8dcdc" />
      <path d="M30 52q14-1 29-3v10H38z" fill="#6cd0e4" />
    </svg>
  );
}

function Balloon() {
  return (
    <svg viewBox="0 0 60 60" className="size-[60px]">
      <defs>
        <radialGradient id="sky" cx=".5" cy=".4" r=".7"><stop offset="0" stopColor="#5cc4e4" /><stop offset="1" stopColor="#0a94c4" /></radialGradient>
        <radialGradient id="ball" cx=".5" cy=".3" r=".7"><stop offset=".5" stopColor="#fff" /><stop offset="1" stopColor="#cfd4d8" /></radialGradient>
      </defs>
      <rect x="1" y="1" width="58" height="58" rx="2" fill="url(#sky)" />
      <path d="M8 1C3 14 10 31 27 33 44 32 50 14 44 1z" fill="url(#ball)" />
      <path d="M28 33q4 8 18 16" fill="none" stroke="#28506c" strokeWidth=".8" />
      <path d="M44 48l3-2 6 6-2 2z" fill="#fff" />
    </svg>
  );
}

function WindLidar() {
  return (
    <svg viewBox="0 0 60 60" className="size-[60px]">
      <rect width="60" height="60" fill="#fff" />
      <circle cx="29" cy="30.500" r="26.500" fill="#0e0e3c" />
      <path d="M6 14q16-4 30-2 7 3 5 11-6 6-10 15 3 5 13-2 6-4 12-4l-1 4q-11 1-16 9-16 6-36-1L1 45v-3q14-3 19-8 5-8 2-15Q15 13 6 14z" fill="#fff" />
    </svg>
  );
}

function ZipFolder() {
  return (
    <svg viewBox="0 0 60 60" className="size-[60px]">
      <path d="M38 54l22-16-14 16z" fill="#001c70" opacity=".45" />
      <path d="M36 34h6l1 16-4 3z" fill="#f4f4f0" />
      <path d="M5 2l32 5 3 27v19l-4 1L5 47z" fill="#f2de8c" stroke="#c8aa50" strokeWidth=".7" />
      <path d="M29 6l9 1v46l-7-1z" fill="#e0c468" />
      <path d="M32 8v45" stroke="#98906c" strokeWidth="5" strokeDasharray="1.500 1.500" />
      <path d="M29 6h7l-1 20q-3 4-6 0z" fill="#b8bcc4" stroke="#707680" strokeWidth=".6" />
    </svg>
  );
}

function ScreenCapture() {
  return (
    <svg viewBox="0 0 60 60" className="size-[60px]">
      <rect width="60" height="60" fill="#111" />
      <rect x="1" y="1" width="29" height="28" fill="#ed1c24" />
      <rect x="31.500" y="1" width="28" height="28" fill="#22b14c" />
      <rect x="1" y="30" width="29" height="29" fill="#00a2e8" />
      <rect x="31.500" y="30" width="28" height="29" fill="#fff200" />
      <circle cx="31" cy="29.500" r="15.500" fill="#111" />
      <circle cx="31" cy="29.500" r="13.500" fill="#3a3a3e" stroke="#2c6cb0" strokeWidth="1.500" />
      <circle cx="31" cy="28" r="6.500" fill="#000" stroke="#8c2c8c" strokeWidth="1.200" />
      <circle cx="26" cy="24.500" r="5" fill="#fff" />
    </svg>
  );
}

const DESKTOP: { name: string; icon: ReactNode; link: boolean }[] = [
  { name: "Recycle Bin", icon: <RecycleBin />, link: false },
  { name: "BL-View", icon: <BLView />, link: true },
  { name: "Google Chrome", icon: <Chrome className="size-[60px]" />, link: true },
  { name: "MW41", icon: <Balloon />, link: true },
  { name: "Wind Lidar Software", icon: <WindLidar />, link: true },
  { name: "AutoScreen...", icon: <ZipFolder />, link: false },
  { name: "Auto Screen Capture", icon: <ScreenCapture />, link: true },
];

function ViIcon({ className }: { className: string }) {
  return (
    <svg viewBox="0 0 16 16" className={className}>
      <rect x=".5" y=".5" width="15" height="15" fill="#fff" stroke="#000" />
      <path d="M4 14V8h8v6M6.500 14v-2h3v2M8 8l4-4v4M2.500 12H4M12 12h2" fill="none" stroke="#000" />
      <path d="M6 9l4 3M10 9l-4 3" stroke="#d02020" />
    </svg>
  );
}

/* ---------- windows ---------- */

const TABS = [
  { name: "System setup", width: "w-[100px]" },
  { name: "Real time data", width: "w-[112px]" },
  { name: "Temp/humidity", width: "w-[115px]" },
  { name: "Scheduling", width: "w-[88px]" },
  { name: "Wind profile", width: "w-[98px]" },
];

function Tabs() {
  return (
    <div role="tablist" className="flex h-[26px] items-end pl-1">
      {TABS.map((t, i) => (
        <button key={t.name} type="button" role="tab" aria-selected={i === 1}
          className={`whitespace-nowrap border-[#85888c] text-xs font-bold text-black ${t.width} ${i === 1 ? "h-[26px] bg-white pb-0.5" : "h-[25px] border border-b-0 bg-[linear-gradient(180deg,#f2f2f2,#ebebeb_50%,#dcdcdc_51%,#cfcfcf)]"}`}>
          {t.name}
        </button>
      ))}
    </div>
  );
}

function MdiButton({ label, children }: { label: string; children: ReactNode }) {
  return (
    <button type="button" aria-label={label} className="flex h-[17px] w-[31px] items-center justify-center rounded-sm border border-[#8e9aa8] bg-[#ccd9e6] shadow-[inset_0_0_0_1px_#dfe9f3]">
      <svg viewBox="0 0 14 11" className="h-[11px] w-3.5" fill="#fff" stroke="#55606c">{children}</svg>
    </button>
  );
}

function TeamViewerLogo({ className }: { className: string }) {
  return (
    <svg viewBox="0 0 56 56" className={className}>
      <rect width="56" height="56" rx="7" fill="#0c0c50" />
      <circle cx="28" cy="28" r="23" fill="#fff" />
      <path d="M7 28l16-8-3 5h16l-3-5 16 8-16 8 3-5H20l3 5z" fill="#0c0c50" />
    </svg>
  );
}

function SponsorPopup() {
  return (
    <section aria-label="Sponsored session" className="absolute right-0 bottom-0 h-[70px] w-[497px] overflow-hidden rounded-tl-md border-t border-l border-black bg-[linear-gradient(180deg,#96acc8,#bcd0ea_28px,#bcd0ea)] shadow-[inset_1px_1px_0_#e8f0fa]">
      <header className="flex h-[29px] items-center pl-2 pr-1.5 pt-1">
        <TeamViewerLogo className="size-4" />
        <h2 className="ml-[5px] flex-1 text-[11px] text-black">Sponsored session</h2>
        <button type="button" aria-label="Close" className="flex h-[17px] w-[31px] items-center justify-center rounded-sm border border-[#5c1c14] bg-[linear-gradient(180deg,#e8a898,#d4705c_48%,#b83820_52%,#cc6048)] shadow-[inset_0_0_0_1px_#f0c0b4]">
          <svg viewBox="0 0 12 10" className="h-2.5 w-3">
            <path d="M2 1l8 8M10 1l-8 8" stroke="#445" strokeWidth="4" /><path d="M2 1l8 8M10 1l-8 8" stroke="#fff" strokeWidth="2.500" />
          </svg>
        </button>
      </header>
      <div className="ml-1.5 mr-1 flex h-[60px] bg-white pl-[9px] pt-[11px]">
        <TeamViewerLogo className="size-14" />
        <p className="ml-4 whitespace-nowrap font-['Roboto'] text-[11px] leading-[13px] text-black">
          This was a free session sponsored by www.teamviewer.com.<br />
          TeamViewer sessions are free of charge for personal use.
        </p>
      </div>
    </section>
  );
}

function InnerTask({ label, active = true, children }: { label: string; active?: boolean; children: ReactNode }) {
  return (
    <button type="button" aria-label={label}
      className={`flex h-[39px] w-[59px] items-center justify-center ${active ? "rounded-sm border border-[#5c708c] bg-[linear-gradient(135deg,#d4dfec,#b4c6dc_50%,#bccce0)] shadow-[inset_0_0_0_1px_#e4ecf6]" : ""}`}>
      {children}
    </button>
  );
}

function InnerTaskbar() {
  return (
    <nav aria-label="Remote taskbar" className="relative flex h-10 shrink-0 gap-[3px] border-t border-[#3c4c60] bg-[linear-gradient(90deg,#8296b0_0,#8a9fbc_60px,#a9bfdb_150px)]">
      <button type="button" aria-label="Start" className="ml-2 mr-[11px] flex items-center"><Orb className="size-[38px]" id="orb-inner" /></button>
      <div className="flex w-[59px]">
        <button type="button" aria-label="Notepad" className="flex h-[39px] w-[54px] items-center justify-center rounded-sm border border-[#5c708c] bg-[linear-gradient(135deg,#b8c8dc,#ccd8e8)] shadow-[inset_0_0_0_1px_#e4ecf6]">
          <svg viewBox="0 0 32 32" className="size-[30px]">
            <path d="M24 3l6 25-8 3z" fill="#8c7850" /><path d="M12 2l13 1 4 25-10-2L1 24z" fill="#eef4f4" stroke="#9ab" strokeWidth=".5" />
            <path d="M12 4l12 1-4 19L2 21z" fill="#5cb4c4" /><path d="M12 4l12 1-3 9-13-2z" fill="#a4dce0" /><path d="M12 2.500h13" stroke="#555" strokeWidth="2" strokeDasharray="1 1" />
          </svg>
        </button>
        <span className="w-[5px] rounded-r-sm border-y border-r border-[#5c708c] bg-[#c4d2e4]" />
      </div>
      <InnerTask label="Control panel" active={false}>
        <svg viewBox="0 0 32 30" className="h-[30px] w-8">
          <rect x="1" y="2" width="30" height="21" rx="2" fill="#2a7cc8" stroke="#1c5490" />
          <circle cx="9" cy="10" r="5" fill="#fca020" /><path d="M9 10V5a5 5 0 0 0-5 5z" fill="#9cd8f8" />
          <path d="M18 7.500h9v3h-9zM18 13.500h9v3h-9z" fill="#3c9ce4" stroke="#d0ecff" />
          <path d="M22.500 7.500v3M22.500 13.500v3" stroke="#d0ecff" />
          <circle cx="7" cy="19" r="1.200" fill="#fca020" /><circle cx="11" cy="19" r="1.200" fill="#fca020" />
          <ellipse cx="16" cy="25" rx="6.500" ry="4.500" fill="#dcdcdc" stroke="#888" strokeWidth=".5" />
        </svg>
      </InnerTask>
      <InnerTask label="Sticky notes">
        <svg viewBox="0 0 34 28" className="h-7 w-[34px]">
          <path d="M6 3l13 5-6 14L1 18z" fill="#a4dca0" /><path d="M10 7l16 1-1 16-16-1z" fill="#94c8f0" /><path d="M14 10l16-5 4 16-15 6z" fill="#fce46c" stroke="#d8b840" strokeWidth=".5" />
        </svg>
      </InnerTask>
      <InnerTask label="Power">
        <svg viewBox="0 0 32 32" className="size-8">
          <rect x=".5" y=".5" width="31" height="31" rx="3" fill="#fc0404" stroke="#000" /><circle cx="16" cy="16" r="10.500" fill="none" stroke="#fff" strokeWidth="2.500" /><path d="M16 9v14" stroke="#fff" strokeWidth="3.500" />
        </svg>
      </InnerTask>
      <InnerTask label="StreamLine XR">
        <svg viewBox="0 0 32 32" className="size-8">
          <rect x=".5" y=".5" width="31" height="31" fill="#e0e0e0" stroke="#000" />
          <path d="M8 20h14v7H8zM11 27v4M20 20v11M12 25v6M17 20v-3h5v-3M20 15h3v5" fill="#fff" stroke="#000" />
          <path d="M11 22l7 2" stroke="#d02020" strokeWidth="1.500" />
          <text x="30" y="12" textAnchor="end" fontSize="11" fontFamily='"Open Sans", sans-serif' fill="#10108c">XR</text>
        </svg>
      </InnerTask>
      <InnerTask label="Explorer"><Folders className="size-8" /></InnerTask>
      <InnerTask label="Command prompt">
        <svg viewBox="0 0 32 26" className="h-[26px] w-8">
          <rect x=".5" y=".5" width="30" height="25" fill="#000" stroke="#888" /><rect x="1" y="1" width="29" height="3" fill="#c8ccd0" />
          <text x="4" y="13" fontSize="8" fontWeight="700" fontFamily='"Liberation Mono", monospace' fill="#fff">C:\_</text>
        </svg>
      </InnerTask>
    </nav>
  );
}

const CAPTION = "bg-[linear-gradient(180deg,#a4b8de,#8ca4d0_48%,#4866a4_52%,#7088bc)]";

function RemoteWindow() {
  return (
    <main className="absolute top-9 right-[214px] bottom-[53px] left-[250px] flex flex-col rounded-[7px] border border-[#d0dcf4] bg-[linear-gradient(180deg,transparent_0,transparent_34px,#ffffff10_90px,#c8d0e8_257px,#2a4c92_258px,#23468c_100%),linear-gradient(100deg,#8498c8_0,#6c86bc_180px,#30529a_330px,#25478e_560px,#3a62ac_800px,#4a74c0_1150px,#7c9cd4_1400px,#a0b8e4_100%)] px-1.5 pb-[7px] shadow-[0_0_0_1px_#0a1834,2px_3px_14px_3px_#00081ecc]">
      <header className="flex h-[34px] shrink-0 items-start">
        <div className="flex h-full flex-1 items-center">
          <RemoteIcon className="ml-0.5 size-[18px]" id="rd-small" />
          <h1 className="ml-[3px] rounded-full bg-[#ffffff59] px-1 text-sm leading-5 text-black shadow-[0_0_10px_6px_#ffffff59]">192.168.0.150 - Remote Desktop Connection</h1>
        </div>
        <div className="flex h-6 overflow-hidden rounded-b-[5px] border border-t-0 border-[#1c2c54] shadow-[0_0_0_1px_#d0dcf4aa]">
          <button type="button" aria-label="Minimise" className={`flex w-[35px] items-end justify-center border-r border-[#1c2c54] pb-1 ${CAPTION}`}>
            <span className="h-[5px] w-[17px] rounded-sm border border-[#444c60] bg-white" />
          </button>
          <button type="button" aria-label="Maximise" className={`flex w-[33px] items-center justify-center border-r border-[#1c2c54] ${CAPTION}`}>
            <span className="h-3.5 w-[18px] border border-[#444c60] bg-white p-[3px]"><span className="block h-full border border-[#444c60] bg-[#5c78b4]" /></span>
          </button>
          <button type="button" aria-label="Close" className="flex w-[59px] items-center justify-center bg-[linear-gradient(180deg,#dc9088,#cc5c50_48%,#a82814_52%,#c44834)]">
            <svg viewBox="0 0 16 14" className="h-3.5 w-4">
              <path d="M3 1l10 12M13 1L3 13" stroke="#444c60" strokeWidth="5" /><path d="M3 1.500l10 11M13 1.500l-10 11" stroke="#fff" strokeWidth="3.200" />
            </svg>
          </button>
        </div>
      </header>
      <div className="relative flex min-h-0 flex-1 flex-col bg-[#d2d2d2] shadow-[0_0_0_1px_#1c2c4c]">
        <header className="flex h-[24px] shrink-0 items-center gap-0.5 bg-[linear-gradient(180deg,#bfcad6,#dae6f4)] pr-[3px] pl-0.5">
          <ViIcon className="size-4" />
          <h2 className="ml-[7px] flex-1 text-[11px] text-[#4c5864]">StreamLine XR v14-6.vi</h2>
          <MdiButton label="Minimise document"><rect x="2.500" y="5.500" width="9" height="3" /></MdiButton>
          <MdiButton label="Restore document"><path d="M5.500.5h7v6h-7zM1.500 3.500h7v7h-7zM4 6h2v2H4z" /></MdiButton>
          <MdiButton label="Close document"><path d="M2 1h3l2 2 2-2h3l-3 4.500L12 10H9L7 8l-2 2H2l3-4.500z" /></MdiButton>
        </header>
        <div className="flex min-h-0 flex-1 flex-col border-2 border-t-[#7c7c7c] border-r-[#f4f4f0] border-b-[#f0f0f0] border-l-[#8c8c8c]">
          <Tabs />
          <div className="w-[1136px] border border-[#8a8a8a] border-l-0 bg-white pr-px pb-0.5 shadow-[2px_1px_0_#fff]">
            <div className="mt-[13px] ml-[5px] border-[13px] border-t-[#1c3890] border-r-[#17307f] border-b-[#04205c] border-l-[#17307f]">
              <div className="flex min-h-[705px] bg-[linear-gradient(180deg,#ac9468_0,#a8966e_11px,#948564_13px,#948564_calc(100%-12px),#625230_100%)] pl-[15px]">
                <LeftColumn />
                <RightColumn />
              </div>
            </div>
          </div>
        </div>
        <InnerTaskbar />
        <SponsorPopup />
      </div>
      <svg viewBox="0 0 14 20" className="absolute top-[878px] right-[93px] h-5 w-3.5" aria-hidden="true">
        <path d="M1 1v15l3.500-3 2.500 6 2.500-1-2.500-6H12z" fill="#fff" stroke="#000" />
      </svg>
    </main>
  );
}

function Taskbar() {
  return (
    <footer className="flex h-[47px] w-full shrink-0 items-center border-t border-[#9cb4dc] bg-[linear-gradient(90deg,#1a3264_0,#1e3a78_60px,#223f88_110px,#23468c_800px,#2c549c_1400px,#2a549c_1590px,#1c3a70_1650px,#24488c_100%)] shadow-[0_-1px_0_#08183c]">
      <button type="button" aria-label="Start" className="ml-[11px]"><Orb className="size-11" id="orb-main" /></button>
      <button type="button" aria-label="Internet Explorer" className="ml-[29px]">
        <svg viewBox="0 0 40 40" className="size-10">
          <path d="M37 22H14c0 7 9 9 14 4h8C32 37 20 40 11 34 0 26 5 6 21 5c12 0 17 8 16 17zM14 17h14c-1-7-12-8-14 0z" fill="#4cc4f4" stroke="#1888c8" strokeWidth=".7" />
          <path d="M7 36C-2 40 2 24 14 13 25 2 40-2 37 9c2-9-10-6-20 3C7 22 2 35 7 36z" fill="#fccc2c" stroke="#d89c10" strokeWidth=".6" />
        </svg>
      </button>
      <button type="button" aria-label="Explorer" className="ml-[31px]"><Folders className="size-10" /></button>
      <button type="button" aria-label="Media Player" className="ml-[30px]">
        <svg viewBox="0 0 34 34" className="size-[34px]">
          <path d="M6 3l27 1v27l-6 2z" fill="#8cc8e4" stroke="#3c88b0" strokeWidth=".7" /><path d="M28 2v31M31 3v29" stroke="#3c88b0" strokeWidth=".7" />
          <rect x="1" y="2" width="26" height="29" fill="#a4d4ec" stroke="#4c98c0" strokeWidth=".7" />
          <circle cx="14" cy="17" r="11" fill="#f07820" stroke="#fcd0a0" /><path d="M10 10l10.500 7L10 24z" fill="#fff" />
        </svg>
      </button>
      <button type="button" aria-label="Google Chrome" className="ml-9"><Chrome className="size-10" /></button>
      <div className="ml-[17px] flex h-full py-px">
        <button type="button" aria-label="Remote Desktop Connection" className="flex w-[61px] items-center justify-center rounded-sm border border-[#f0f4fc] bg-[linear-gradient(160deg,#c0cce4,#8ca0cc_55%,#b8c8e8)]">
          <RemoteIcon className="size-[38px]" id="rd-large" />
        </button>
        <span className="w-[5px] rounded-r-sm border border-l-0 border-[#b0c0e0] bg-[#6c84b8]" />
      </div>
      <div className="ml-auto flex h-full items-center">
        <button type="button" aria-label="Show hidden icons" className="mr-[18px]">
          <svg viewBox="0 0 12 8" className="h-2 w-3"><path d="M6 1l5 6H1z" fill="#fff" stroke="#182c54" strokeWidth=".5" /></svg>
        </button>
        <svg viewBox="0 0 112 24" className="h-6 w-28" aria-hidden="true">
          <g stroke="#142448" strokeWidth=".8">
            <path d="M1 3h2v18H1zM4 4q4-2 7 0 3 2 7 0v9q-4 2-7 0-3-2-7 0z" fill="#fff" />
            <circle cx="14" cy="16" r="5.500" fill="#e02c20" stroke="#a01810" />
            <path d="M30 4h3V2.500h4V4h3v17H30z" fill="#fff" />
            <path d="M42 4h2v4h2V4h2v4h1v4q0 3-2.500 3.500V22h-2.500v-6.500Q41 15 41 12V8h1z" fill="#fff" />
            <path d="M65 7h14v11H65z" fill="#3c587c" stroke="#fff" strokeWidth="1.600" />
            <path d="M60 3h6v8h-2v9h-2v-9h-2zM68 20h9v1.500h-9z" fill="#fff" />
            <path d="M91 9h4l5-6v19l-5-6h-4z" fill="#fff" />
            <circle cx="104" cy="16" r="5.500" fill="#e02c20" stroke="#a01810" />
          </g>
          <path d="M11.500 13.500l5 5M16.500 13.500l-5 5" stroke="#fff" strokeWidth="2" />
          <circle cx="104" cy="16" r="3.500" fill="none" stroke="#fff" strokeWidth="1.500" /><path d="M101.500 13.500l5 5" stroke="#fff" strokeWidth="1.500" />
        </svg>
        <time dateTime="2023-08-06T07:20" className="ml-2 flex w-[94px] flex-col text-center text-sm leading-[23px] text-white">
          <span>07:20</span>
          <span>06/08/2023</span>
        </time>
        <button type="button" aria-label="Show desktop" className="ml-[5px] h-[46px] w-3.5 border border-[#7088b4] bg-[linear-gradient(160deg,#5c74a4,#1c3468_40%,#2c4c8c)]" />
      </div>
    </footer>
  );
}

export default function App() {
  return (
    <div className="flex h-screen w-full flex-col overflow-hidden bg-[radial-gradient(ellipse_900px_400px_at_76%_-8%,#4090ff_0,#2c74f0_45%,transparent_100%),radial-gradient(ellipse_500px_700px_at_100%_5%,#1c64e4_0,transparent_100%),linear-gradient(38deg,transparent_12%,#0450c860_16%,transparent_19%),linear-gradient(322deg,transparent_24%,#1464e055_32%,transparent_34%),linear-gradient(90deg,#0238b4_0,#0238b4_55%,#0448c8_100%)] font-['Open_Sans','Noto_Sans',sans-serif]">
      <div className="relative min-h-0 flex-1">
        <ul className="flex w-[94px] flex-col pt-[7px]">
          {DESKTOP.map((d) => (
            <li key={d.name} className="h-[129px]">
              <a href="#" className="flex flex-col items-center">
                <span className="relative block">
                  {d.icon}
                  {d.link && <Shortcut />}
                </span>
                <span className="mt-1 w-[90px] text-center text-sm leading-5 text-white [text-shadow:1px_1px_2px_#000,0_1px_2px_#000]">{d.name}</span>
              </a>
            </li>
          ))}
        </ul>
        <RemoteWindow />
      </div>
      <Taskbar />
    </div>
  );
}
